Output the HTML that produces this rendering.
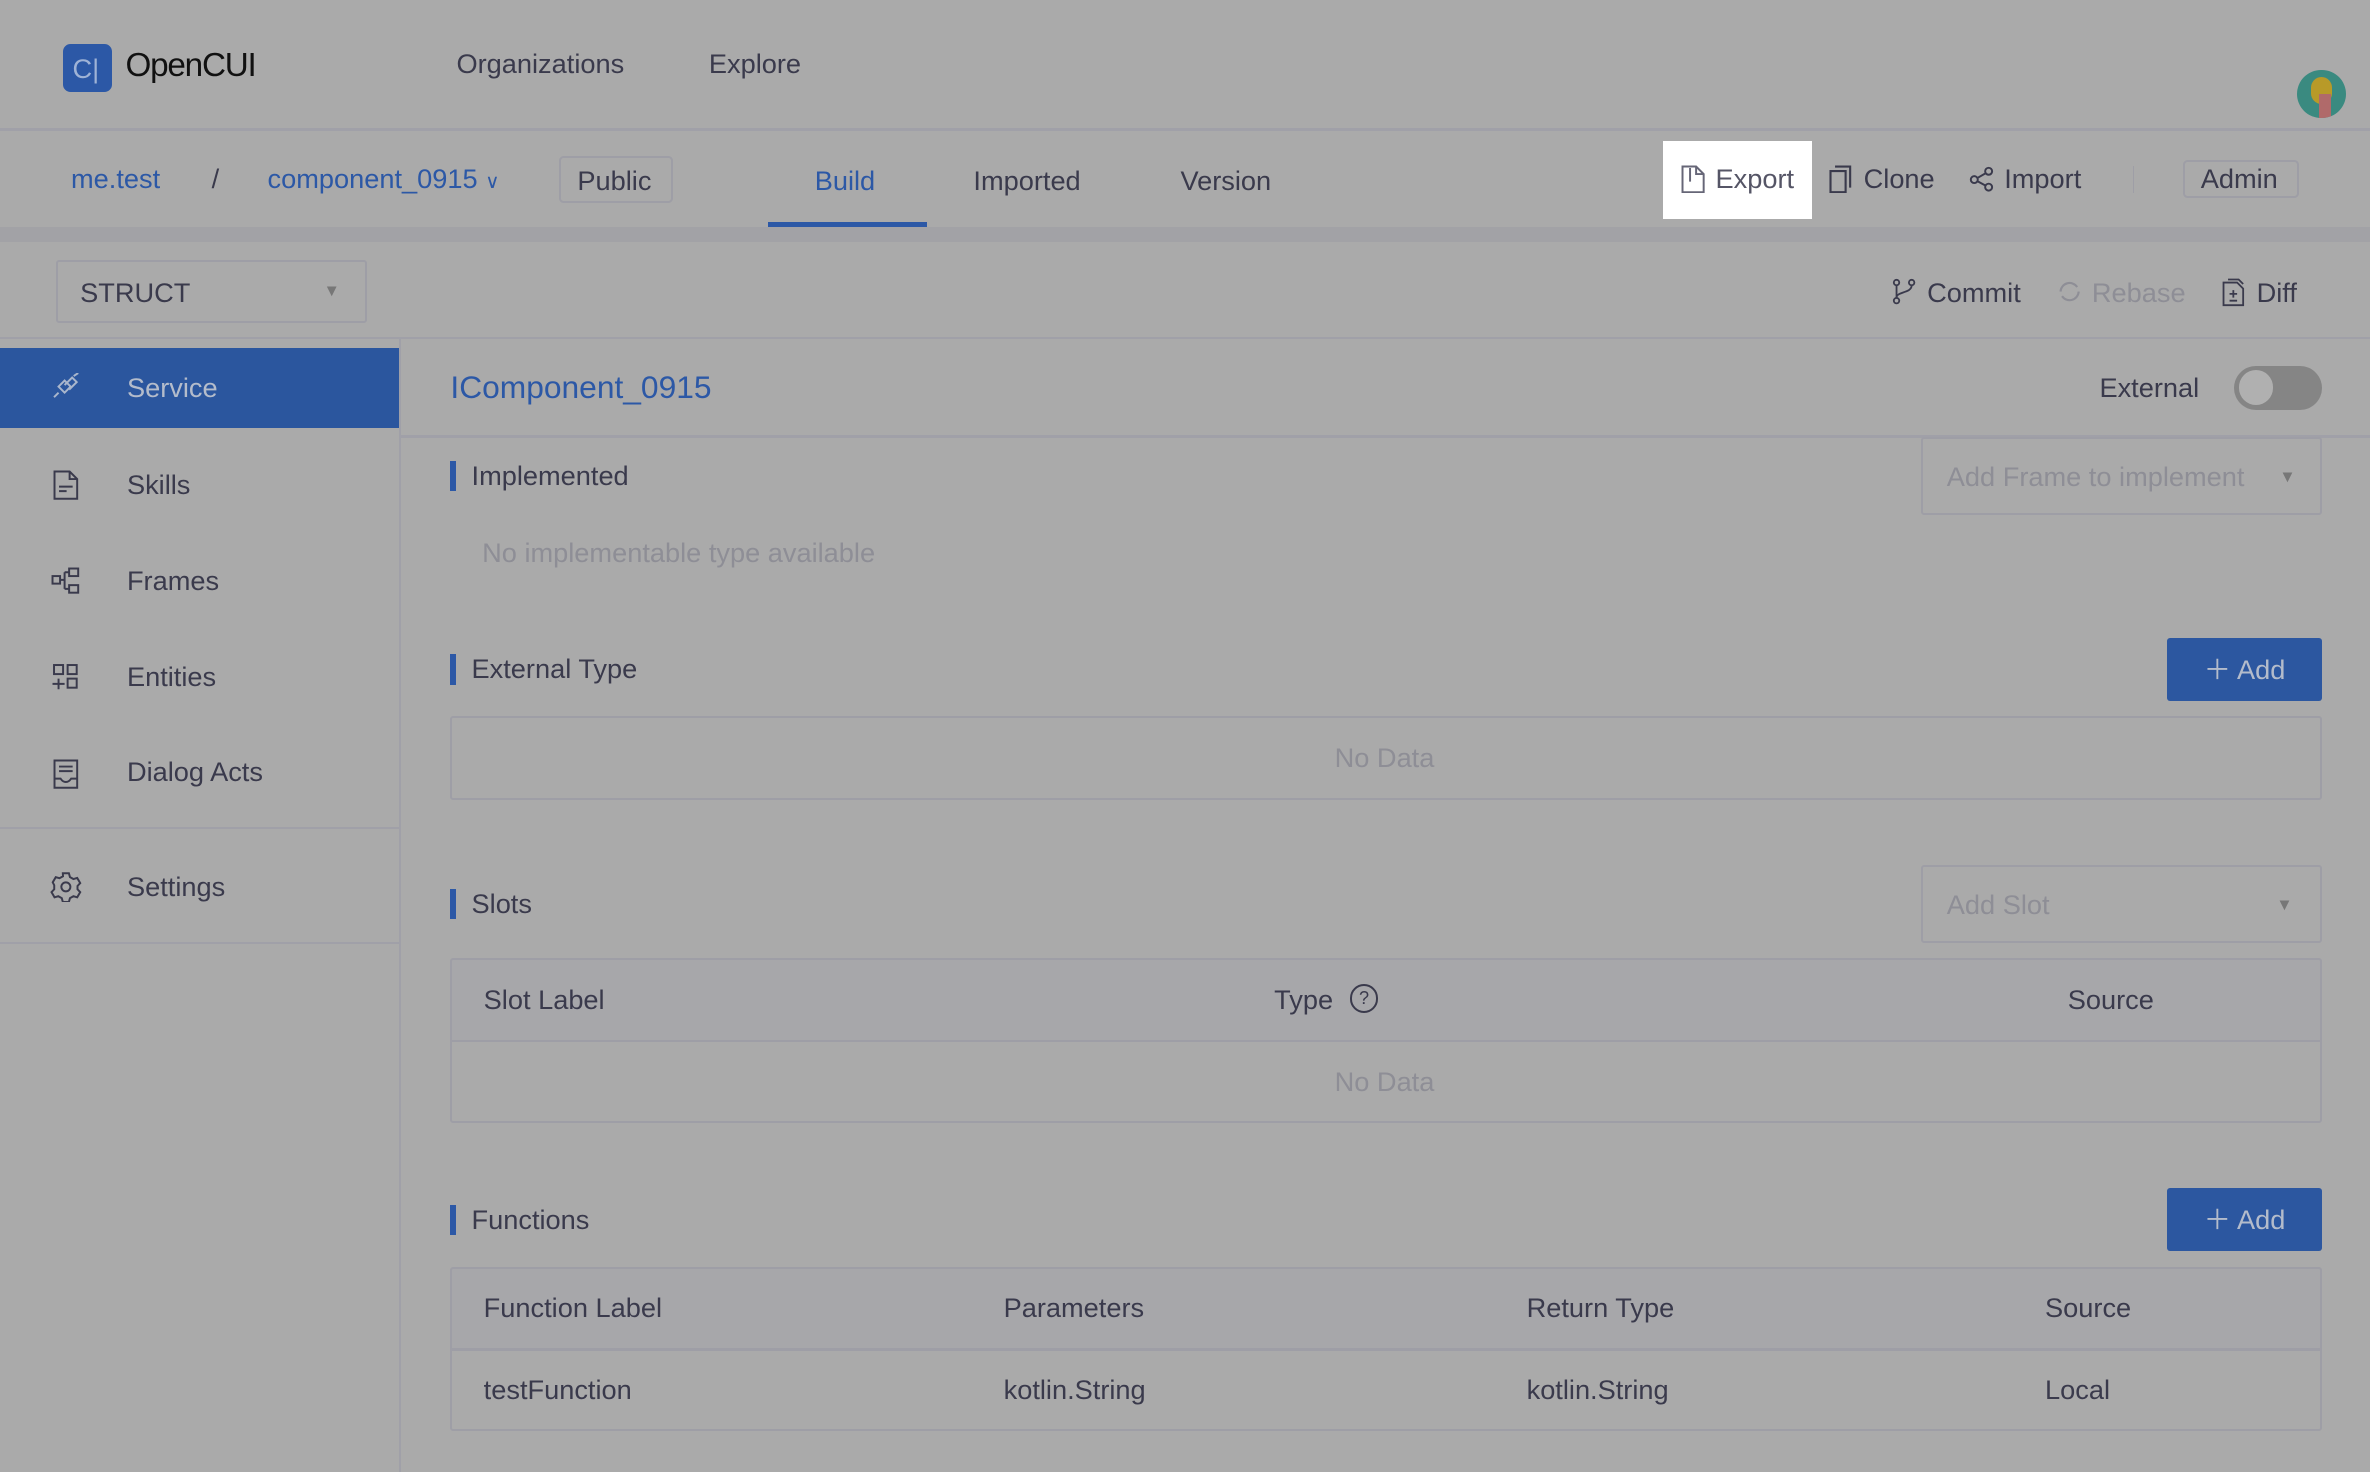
<!DOCTYPE html>
<html><head><meta charset="utf-8"><style>
*{box-sizing:border-box;margin:0;padding:0}
html,body{width:2370px;height:1472px;overflow:hidden;background:#aaaaaa}
#w{zoom:1.51148;width:1568px;height:974px;position:relative;font-family:"Liberation Sans",Arial,sans-serif;color:#3a3a4c;font-size:18px}
.a{position:absolute;white-space:nowrap}
.blue{color:#2c58a6}
.hl{position:absolute;left:0;right:0;height:2px;background:#a0a0a8}
.box{position:absolute;border:1.5px solid #9e9ea6;border-radius:3px}
.sec{position:absolute;left:298px;border-left:4px solid #2c58a6;padding-left:10px;font-size:18px;line-height:20px}
.btn{position:absolute;background:#2c57a0;color:#b4bccb;border-radius:2px;width:102px;height:42px;font-size:18px;line-height:42px;text-align:center}
.gray{color:#8e8e96}
svg{position:absolute}
</style></head><body><div id="w">
<div class="a" style="left:42px;top:29px;width:32px;height:32px;background:#2c58a6;border-radius:5px"></div>
<div class="a" style="left:48px;top:35px;font-size:18px;color:#9fb3d6">C|</div>
<div class="a" style="left:83px;top:31px;font-size:22px;color:#111;letter-spacing:-0.8px">OpenCUI</div>
<div class="a" style="left:302px;top:32px;font-size:18px">Organizations</div>
<div class="a" style="left:469px;top:32px;font-size:18px">Explore</div>
<div class="a" style="left:1520px;top:46px;width:32px;height:32px;border-radius:50%;background:#3a8a80;overflow:hidden"><div style="position:absolute;left:9px;top:5px;width:14px;height:18px;border-radius:7px;background:#b89a28"></div><div style="position:absolute;left:14px;top:16px;width:8px;height:16px;background:#b06a6a"></div></div>
<div class="hl" style="top:85px;height:1.5px"></div>
<div class="a blue" style="left:47px;top:108px">me.test</div>
<div class="a" style="left:140px;top:108px">/</div>
<div class="a blue" style="left:177px;top:108px">component_0915 <span style="font-size:13px">∨</span></div>
<div class="box" style="left:370px;top:103px;width:75px;height:31px"></div>
<div class="a" style="left:382px;top:109px">Public</div>
<div class="a blue" style="left:539px;top:109px">Build</div>
<div class="a" style="left:508px;top:147px;width:105px;height:3px;background:#2c58a6"></div>
<div class="a" style="left:644px;top:109px">Imported</div>
<div class="a" style="left:781px;top:109px">Version</div>
<div class="a" style="left:1100px;top:93px;width:99px;height:52px;background:#fff"></div>
<svg style="left:1112px;top:109px" width="16" height="19" viewBox="0 0 16 19"><path d="M1 1h9l5 5v12H1z M10 1v5h5 M6 2v9" fill="none" stroke="#666677" stroke-width="1.3"/></svg>
<div class="a" style="left:1135px;top:108px;color:#555566">Export</div>
<svg style="left:1210px;top:109px" width="16" height="19" viewBox="0 0 16 19"><path d="M4 1h10v14 M1 4h10v14H1z" fill="none" stroke="#3a3a4c" stroke-width="1.4"/></svg>
<div class="a" style="left:1233px;top:108px">Clone</div>
<svg style="left:1303px;top:110px" width="17" height="17" viewBox="0 0 17 17"><circle cx="3.5" cy="9" r="2.3" fill="none" stroke="#3a3a4c" stroke-width="1.3"/><circle cx="13" cy="3.5" r="2.3" fill="none" stroke="#3a3a4c" stroke-width="1.3"/><circle cx="13" cy="14" r="2.3" fill="none" stroke="#3a3a4c" stroke-width="1.3"/><path d="M5.5 8 11 4.8M5.5 10 11 13" stroke="#3a3a4c" stroke-width="1.3"/></svg>
<div class="a" style="left:1326px;top:108px">Import</div>
<div class="a" style="left:1411px;top:110px;width:1px;height:18px;background:#9e9ea6"></div>
<div class="box" style="left:1444px;top:106px;width:77px;height:25px"></div>
<div class="a" style="left:1456px;top:108px">Admin</div>
<div class="a" style="left:0;top:150px;width:1568px;height:10px;background:#a2a2a6"></div>
<div class="box" style="left:37px;top:172px;width:206px;height:42px;border-radius:2px"></div>
<div class="a" style="left:53px;top:183px">STRUCT</div>
<div class="a" style="left:214px;top:186px;font-size:11px;color:#777">▼</div>
<svg style="left:1252px;top:184px" width="16" height="18" viewBox="0 0 16 18"><circle cx="3" cy="3" r="1.8" fill="none" stroke="#3a3a4c" stroke-width="1.2"/><circle cx="3" cy="15" r="1.8" fill="none" stroke="#3a3a4c" stroke-width="1.2"/><circle cx="13" cy="3" r="1.8" fill="none" stroke="#3a3a4c" stroke-width="1.2"/><path d="M3 5v8M13 5c0 5-10 4-10 8" fill="none" stroke="#3a3a4c" stroke-width="1.2"/></svg>
<div class="a" style="left:1275px;top:183px">Commit</div>
<svg style="left:1360px;top:184px" width="18" height="18" viewBox="0 0 18 18"><path d="M3 9a6 6 0 0 1 11-3M15 9a6 6 0 0 1-11 3" fill="none" stroke="#8e8e96" stroke-width="1.4"/></svg>
<div class="a gray" style="left:1384px;top:183px">Rebase</div>
<svg style="left:1470px;top:184px" width="15" height="19" viewBox="0 0 15 19"><path d="M1 3h9l4 4v11H1z M4 1h7l3 3" fill="none" stroke="#3a3a4c" stroke-width="1.2"/><path d="M7.5 8v5M5 10.5h5M5 15h5" stroke="#3a3a4c" stroke-width="1.2"/></svg>
<div class="a" style="left:1493px;top:183px">Diff</div>
<div class="hl" style="top:223px;height:1.5px"></div>
<div class="a" style="left:264px;top:224px;width:1.5px;height:750px;background:#a0a0a8"></div>
<div class="a" style="left:0;top:230px;width:264px;height:53px;background:#2b569e"></div>
<svg style="left:34px;top:247px" width="20" height="18" viewBox="0 0 20 18"><path d="M2 16l3-3M15 2l3-2M5 9l4-4 4 4-4 4z M9 8l5-5 3 3-5 5" fill="none" stroke="#a9b6cc" stroke-width="1.3"/></svg>
<div class="a" style="left:84px;top:246px;color:#b4bccb">Service</div>
<svg style="left:35px;top:311px" width="18" height="20" viewBox="0 0 18 20"><path d="M1 1h10l5 5v13H1z M11 1v5h5 M4 11h9M4 14h5" fill="none" stroke="#3a3a4c" stroke-width="1.3"/></svg>
<div class="a" style="left:84px;top:310px">Skills</div>
<svg style="left:34px;top:375px" width="20" height="18" viewBox="0 0 20 18"><rect x="1" y="6" width="5" height="5" fill="none" stroke="#3a3a4c" stroke-width="1.3"/><rect x="12" y="1" width="6" height="5" fill="none" stroke="#3a3a4c" stroke-width="1.3"/><rect x="12" y="12" width="6" height="5" fill="none" stroke="#3a3a4c" stroke-width="1.3"/><path d="M6 8.5h3M9 3.5v11M9 3.5h3M9 14.5h3" fill="none" stroke="#3a3a4c" stroke-width="1.3"/></svg>
<div class="a" style="left:84px;top:374px">Frames</div>
<svg style="left:34px;top:438px" width="20" height="20" viewBox="0 0 20 20"><rect x="2" y="2" width="6" height="6" fill="none" stroke="#3a3a4c" stroke-width="1.3"/><rect x="11" y="2" width="6" height="6" fill="none" stroke="#3a3a4c" stroke-width="1.3"/><rect x="11" y="11" width="6" height="6" fill="none" stroke="#3a3a4c" stroke-width="1.3"/><path d="M5 11v7M1 14.5h8" stroke="#3a3a4c" stroke-width="1.3"/></svg>
<div class="a" style="left:84px;top:437px">Entities</div>
<svg style="left:35px;top:502px" width="18" height="20" viewBox="0 0 18 20"><path d="M1 1h15v18H1z M4 5h9M4 8h9M1 13h4c2 3 5 3 7 0h4" fill="none" stroke="#3a3a4c" stroke-width="1.3"/></svg>
<div class="a" style="left:84px;top:500px">Dialog Acts</div>
<div class="a" style="left:0;top:547px;width:264px;height:1.5px;background:#a0a0a8"></div>
<svg style="left:33px;top:576px" width="21" height="21" viewBox="0 0 21 21"><circle cx="10.5" cy="10.5" r="3" fill="none" stroke="#3a3a4c" stroke-width="1.3"/><path d="M8.5 1.5h4l.7 2.5 2.3 1.3 2.5-.7 2 3.4-1.8 1.9v2.2l1.8 1.9-2 3.4-2.5-.7-2.3 1.3-.7 2.5h-4l-.7-2.5-2.3-1.3-2.5.7-2-3.4 1.8-1.9V9.4L1.8 7.5l2-3.4 2.5.7 2.3-1.3z" fill="none" stroke="#3a3a4c" stroke-width="1.3"/></svg>
<div class="a" style="left:84px;top:576px">Settings</div>
<div class="a" style="left:0;top:623px;width:264px;height:1.5px;background:#a0a0a8"></div>
<div class="a blue" style="left:298px;top:244px;font-size:21px">IComponent_0915</div>
<div class="a" style="left:1389px;top:246px">External</div>
<div class="a" style="left:1478px;top:242px;width:58px;height:29px;border-radius:15px;background:#858585"></div>
<div class="a" style="left:1481px;top:245px;width:23px;height:23px;border-radius:50%;background:#b0b0b0"></div>
<div class="a" style="left:265px;top:288px;right:0;height:1.5px;background:#a0a0a8"></div>
<div class="sec" style="top:305px">Implemented</div>
<div class="box" style="left:1271px;top:289px;width:265px;height:52px;border-radius:2px"></div>
<div class="a gray" style="left:1288px;top:305px">Add Frame to implement</div>
<div class="a" style="left:1508px;top:309px;font-size:11px;color:#777">▼</div>
<div class="a gray" style="left:319px;top:355px">No implementable type available</div>
<div class="sec" style="top:433px">External Type</div>
<div class="btn" style="left:1434px;top:422px">＋ Add</div>
<div class="box" style="left:298px;top:474px;width:1238px;height:55px;border-radius:2px"></div>
<div class="a gray" style="left:883px;top:491px">No Data</div>
<div class="sec" style="top:588px">Slots</div>
<div class="box" style="left:1271px;top:572px;width:265px;height:52px;border-radius:2px"></div>
<div class="a gray" style="left:1288px;top:588px">Add Slot</div>
<div class="a" style="left:1506px;top:592px;font-size:11px;color:#777">▼</div>
<div class="box" style="left:298px;top:634px;width:1238px;height:109px;border-radius:2px;background:linear-gradient(#a7a7aa 0 54px,#aaaaaa 54px)"></div>
<div class="a" style="left:299px;top:688px;width:1236px;height:1.5px;background:#9e9ea6"></div>
<div class="a" style="left:320px;top:651px">Slot Label</div>
<div class="a" style="left:843px;top:651px">Type</div>
<div class="a" style="left:893px;top:651px;width:19px;height:19px;border:1.5px solid #3a3a4c;border-radius:50%;font-size:12px;text-align:center;line-height:16px">?</div>
<div class="a" style="left:1368px;top:651px">Source</div>
<div class="a gray" style="left:883px;top:705px">No Data</div>
<div class="sec" style="top:797px">Functions</div>
<div class="btn" style="left:1434px;top:786px">＋ Add</div>
<div class="box" style="left:298px;top:838px;width:1238px;height:109px;border-radius:2px;background:linear-gradient(#a7a7aa 0 54px,#aaaaaa 54px)"></div>
<div class="a" style="left:299px;top:892px;width:1236px;height:1.5px;background:#9e9ea6"></div>
<div class="a" style="left:320px;top:855px">Function Label</div>
<div class="a" style="left:664px;top:855px">Parameters</div>
<div class="a" style="left:1010px;top:855px">Return Type</div>
<div class="a" style="left:1353px;top:855px">Source</div>
<div class="a" style="left:320px;top:909px">testFunction</div>
<div class="a" style="left:664px;top:909px">kotlin.String</div>
<div class="a" style="left:1010px;top:909px">kotlin.String</div>
<div class="a" style="left:1353px;top:909px">Local</div>
</div></body></html>
